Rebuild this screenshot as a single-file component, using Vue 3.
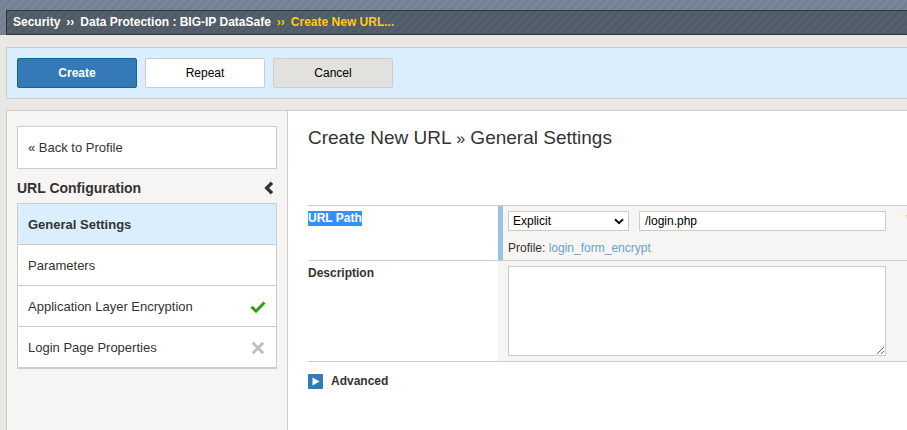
<script setup>
import { ref } from 'vue'

const matchType = ref('Explicit')
const path = ref('/login.php')
const description = ref('')
const sections = [
  { label: 'General Settings', active: true },
  { label: 'Parameters' },
  { label: 'Application Layer Encryption', state: 'on' },
  { label: 'Login Page Properties', state: 'off' },
]
</script>

<template>
  <div class="page">
    <header class="band">
      <nav class="crumbs" aria-label="Breadcrumb">
        <a href="#">Security</a>
        <span class="sep">››</span>
        <a href="#">Data Protection : BIG-IP DataSafe</a>
        <span class="sep current">››</span>
        <a href="#" class="current">Create New URL...</a>
      </nav>
    </header>

    <div class="toolbar">
      <button type="button" class="btn primary">Create</button>
      <button type="button" class="btn">Repeat</button>
      <button type="button" class="btn muted">Cancel</button>
    </div>

    <div class="panel">
      <aside class="sidebar">
        <a href="#" class="back">« Back to Profile</a>
        <div class="side-head">
          <h2>URL Configuration</h2>
          <button type="button" class="collapse" aria-label="Collapse">
            <svg width="10" height="14" viewBox="0 0 10 14"><path d="M8 1.700 2.700 7 8 12.300" fill="none" stroke="#333" stroke-width="3.400" /></svg>
          </button>
        </div>
        <nav class="menu">
          <a v-for="s in sections" :key="s.label" href="#" :class="{ active: s.active }">
            <span>{{ s.label }}</span>
            <svg v-if="s.state === 'on'" width="16" height="14" viewBox="0 0 16 14"><path d="M1.500 6.800 6 11.200 14.500 2.500" fill="none" stroke="#2f9e0c" stroke-width="3" /></svg>
            <svg v-if="s.state === 'off'" width="16" height="14" viewBox="0 0 16 14"><path d="M2.700 1.700 13.300 12.300M13.300 1.700 2.700 12.300" fill="none" stroke="#c0c0c0" stroke-width="3" /></svg>
          </a>
        </nav>
      </aside>

      <main class="content">
        <h1>Create New URL <small>»</small> General Settings</h1>
        <form class="settings" @submit.prevent>
          <div class="row">
            <div class="name"><label for="path"><mark>URL Path</mark></label></div>
            <div class="value required">
              <div class="fields">
                <div class="select">
                  <select v-model="matchType" aria-label="Match type">
                    <option>Explicit</option>
                    <option>Wildcard</option>
                  </select>
                  <svg width="10" height="7" viewBox="0 0 10 7"><path d="M1 1.200 5 5.200 9 1.200" fill="none" stroke="#111" stroke-width="2" /></svg>
                </div>
                <input id="path" v-model="path" type="text">
                <span class="star">*</span>
              </div>
              <p>Profile: <a href="#">login_form_encrypt</a></p>
            </div>
          </div>
          <div class="row">
            <div class="name"><label for="description">Description</label></div>
            <div class="value">
              <textarea id="description" v-model="description"></textarea>
            </div>
          </div>
        </form>
        <button type="button" class="advanced">
          <svg width="15" height="15" viewBox="0 0 15 15"><rect width="15" height="15" rx="1" fill="#337ab7" /><path d="M4.500 3.500v8l7-4z" fill="#fff" /></svg>
          Advanced
        </button>
      </main>
    </div>
  </div>
</template>

<style>
body {
  background: #e9e8e4;
}
</style>

<style scoped>
.page {
  display: flex;
  flex-direction: column;
  min-height: 100vh;
  overflow: hidden;
  font: 12px/16px "Liberation Sans", Arial, sans-serif;
  color: #333;
}
.page * {
  box-sizing: border-box;
}
a {
  color: inherit;
  text-decoration: none;
}
button, input, select, textarea {
  font: inherit;
  margin: 0;
}
.band {
  padding: 10px 0 0 6px;
  background: repeating-linear-gradient(135deg, #728293 0, #728293 3px, #7a899a 4px, #7a899a 5px, #728293 6px);
}
.crumbs {
  display: flex;
  align-items: center;
  gap: 6px;
  height: 25px;
  padding: 0 0 1px 6px;
  border: 1px solid #333;
  border-right: 0;
  background: repeating-linear-gradient(135deg, #4f5b65 0, #4f5b65 3px, #55616c 4px, #55616c 5px, #4f5b65 6px);
  color: #fff;
  font-weight: bold;
  white-space: nowrap;
}
.crumbs .current {
  color: #fc1;
}
.toolbar {
  display: flex;
  gap: 8px;
  margin: 12px 0 11px 6px;
  padding: 10px;
  border: 1px solid #ccc;
  border-right: 0;
  background: #dbeefe;
}
.btn {
  width: 120px;
  height: 30px;
  padding: 0;
  border: 1px solid #ccc;
  border-radius: 2px;
  background: #fff;
  color: #000;
}
.btn.primary {
  border-color: #0f66a3;
  background: #337ab7;
  color: #fff;
  font-weight: bold;
}
.btn.muted {
  background: #e2e1de;
}
.panel {
  display: flex;
  flex: 1;
  margin-left: 6px;
  border: solid #ccc;
  border-width: 1px 0 0 1px;
  background: #fff;
}
.sidebar {
  flex: none;
  width: 281px;
  padding: 15px 10px;
  border-right: 1px solid #ccc;
  background: #f6f5f3;
  font-size: 13px;
}
.back {
  display: flex;
  align-items: center;
  height: 43px;
  padding-left: 10px;
  border: 1px solid #ccc;
  background: #fff;
}
.side-head {
  display: flex;
  align-items: center;
  justify-content: space-between;
  height: 34px;
  padding: 4px 3px 0 0;
}
h2 {
  margin: 0;
  font-size: 14px;
  font-weight: bold;
}
.collapse {
  display: flex;
  padding: 0;
  border: 0;
  background: none;
}
.menu {
  border: 1px solid #ccc;
  background: #fff;
}
.menu a {
  display: flex;
  align-items: center;
  justify-content: space-between;
  height: 41px;
  padding: 2px 10px 0;
  border-bottom: 1px solid #ccc;
}
.menu a.active {
  background: #dbeefe;
  font-weight: bold;
}
.content {
  flex: 1;
  min-width: 0;
  padding: 15px 0 0 20px;
}
h1 {
  margin: 0 0 54px;
  font-size: 19px;
  line-height: 24px;
  font-weight: normal;
}
h1 small {
  font-size: 16px;
}
.settings {
  border-top: 1px solid #ccc;
}
.row {
  display: flex;
  border-bottom: 1px solid #ccc;
}
.name {
  flex: none;
  width: 190px;
  padding-top: 4px;
  font-weight: bold;
}
mark {
  padding-bottom: 1px;
  background: #3390ff;
  color: #fff;
}
.value {
  flex: 1;
  min-width: 0;
  padding: 5px 0 5px 10px;
  background: #f6f5f3;
}
.value.required {
  padding: 5px 0 4px 5px;
  border-left: 5px solid #97c3e3;
}
.fields {
  display: flex;
  gap: 10px;
}
.select {
  position: relative;
  flex: none;
  width: 121px;
}
.select svg {
  position: absolute;
  right: 5px;
  top: 7px;
  pointer-events: none;
}
select, input, textarea {
  display: block;
  border: 1px solid #ccc;
  border-radius: 0;
  background: #fff;
  color: #000;
}
select {
  width: 100%;
  height: 20px;
  padding: 0 4px;
  appearance: none;
}
input {
  flex: none;
  width: 247px;
  height: 20px;
  padding: 0 5px;
}
.star {
  padding-left: 10px;
  color: #c60;
}
.value p {
  margin: 9px 0 0;
}
.value p a {
  color: #68a2c6;
}
textarea {
  width: 378px;
  max-width: 100%;
  height: 90px;
}
.advanced {
  display: flex;
  align-items: center;
  gap: 8px;
  margin-top: 11px;
  padding: 0;
  border: 0;
  background: none;
  color: #333;
  font-weight: bold;
}
</style>
